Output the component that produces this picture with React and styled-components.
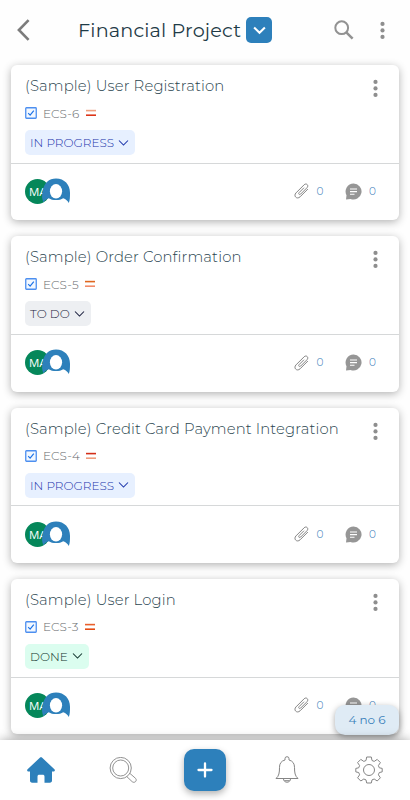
import React from 'react'
import styled, { createGlobalStyle } from 'styled-components'

const GlobalStyle = createGlobalStyle`
  * { box-sizing: border-box; }
  body {
    margin: 0;
    overflow: hidden;
    background: #fefefe;
    font-family: Montserrat, Inter, 'Open Sans', sans-serif;
  }
  svg { display: block; flex: none; }
  button { border: 0; padding: 0; background: none; font: inherit; }
`

const Screen = styled.div`
  position: relative;
  display: flex;
  flex-direction: column;
  height: 800px;
  overflow: hidden;
  background: #fefefe;
`
const Header = styled.header`
  display: flex;
  align-items: center;
  height: 65px;
  flex: none;
  padding: 0 25.5px 5px 17px;
`
const Title = styled.h1`
  margin: 0 0 0 48px;
  width: 168px;
  color: #1f3b47;
  font-size: 19.2px;
  font-weight: 400;
  line-height: 24px;
  letter-spacing: .17px;
  white-space: nowrap;
`
const ProjectToggle = styled.button`
  display: grid;
  place-items: center;
  width: 26px;
  height: 26px;
  border-radius: 5px;
  background: #2d80bb;
`
const HeaderActions = styled.div`
  display: flex;
  align-items: center;
  gap: 26px;
  margin-left: auto;
`
const List = styled.main`
  display: flex;
  flex-direction: column;
  gap: 16px;
  flex: 1;
  min-height: 0;
  padding: 0 11px;
`
const Card = styled.article`
  display: flex;
  flex-direction: column;
  flex: none;
  height: 155.3px;
  border-radius: 6px;
  background: #fff;
  box-shadow: 0 2px 8px rgba(0, 0, 0, .3);
`
const CardBody = styled.div`
  display: flex;
  justify-content: space-between;
  height: 98.7px;
  padding: 10px 21px 0 14px;
  border-bottom: 1px solid #d6d8d9;
`
const CardMenu = styled.button`
  height: 19px;
  margin-top: 4px;
`
const CardTitle = styled.h2`
  margin: 0;
  color: #2b4650;
  font-size: 14.8px;
  font-weight: 300;
  line-height: 22px;
  letter-spacing: .14px;
  white-space: nowrap;
`
const Meta = styled.div`
  display: flex;
  align-items: center;
  height: 16px;
  margin-top: 8px;
`
const Key = styled.span`
  width: ${props => props.$width}px;
  margin-left: 6px;
  color: #66696c;
  font-size: 12px;
  font-weight: 300;
  letter-spacing: .1px;
  white-space: nowrap;
`
const Status = styled.button`
  display: flex;
  align-items: center;
  justify-content: space-between;
  width: ${props => props.$width}px;
  height: 25px;
  margin-top: 9px;
  padding: 0 6px 0 5px;
  border-radius: 5px;
  color: ${props => props.$color};
  background: ${props => props.$background};
  font-size: 12px;
  font-weight: 300;
  white-space: nowrap;
`
const CardFooter = styled.div`
  display: flex;
  align-items: center;
  flex: 1;
  padding: 0 22px 1px 14px;
`
const Avatar = styled.div`
  width: 25px;
  height: 25px;
  padding-left: 4px;
  border-radius: 50%;
  color: #fff;
  background: #05875a;
  font: 11.5px/25px 'Open Sans', sans-serif;
`
const UserAvatar = styled.svg`
  position: relative;
  margin-left: -9px;
`
const Counter = styled.div`
  display: flex;
  align-items: center;
  margin-left: ${props => props.$push || 'auto'};
`
const Count = styled.span`
  width: 8px;
  margin-left: 7.5px;
  color: #3579b8;
  font-size: 10.5px;
  font-weight: 300;
`
const Toast = styled.div`
  position: absolute;
  right: 11px;
  bottom: 65px;
  width: 64px;
  height: 30px;
  border-radius: 10px;
  color: #397fba;
  background: #dfebf5;
  box-shadow: 0 2px 6px rgba(0, 0, 0, .35);
  font-size: 12px;
  line-height: 30px;
  text-align: center;
`
const NavBar = styled.nav`
  position: relative;
  display: grid;
  grid-template-columns: repeat(5, 1fr);
  place-items: center;
  flex: none;
  height: 60px;
  background: #fff;
  box-shadow: 0 0 10px rgba(0, 0, 0, .35);
`
const AddButton = styled.button`
  display: grid;
  place-items: center;
  width: 42px;
  height: 42px;
  border-radius: 10px;
  background: #2d80bb;
  box-shadow: 0 3px 7px rgba(0, 0, 0, .3);
`

const statuses = {
  progress: { label: 'IN PROGRESS', width: 110, color: '#1b34ab', background: '#e7f0ff' },
  todo: { label: 'TO DO', width: 66, color: '#191d3d', background: '#edeff2' },
  done: { label: 'DONE', width: 63.5, color: '#0f332c', background: '#dbfdef' },
}

const cards = [
  { title: '(Sample) User Registration', id: 'ECS-6', keyWidth: 42.5, status: 'progress', colors: ['#efa080', '#dc3518'] },
  { title: '(Sample) Order Confirmation', id: 'ECS-5', keyWidth: 42, status: 'todo', colors: ['#df671f', '#f28b68'] },
  { title: '(Sample) Credit Card Payment Integration', id: 'ECS-4', keyWidth: 43, status: 'progress', colors: ['#d32e19', '#ef9d7d'] },
  { title: '(Sample) User Login', id: 'ECS-3', keyWidth: 41.5, status: 'done', colors: ['#e9602b', '#e44b12'] },
]

const Dots = () => (
  <svg width='5' height='19' viewBox='0 0 5 19' fill='#8e8e8e'>
    <circle cx='2.5' cy='2.9' r='2.1' />
    <circle cx='2.5' cy='9.4' r='2.1' />
    <circle cx='2.5' cy='15.9' r='2.1' />
  </svg>
)

const Chevron = () => (
  <svg width='11' height='8' viewBox='0 0 11 8' fill='none' stroke='currentColor' strokeWidth='1.05'>
    <path d='M1 1.5 5.5 6 10 1.5' />
  </svg>
)

const Priority = ({ colors }) => (
  <svg width='10' height='8' viewBox='0 0 10 8' strokeWidth='1.6'>
    <path d='M0 1.6h10' stroke={colors[0]} />
    <path d='M0 6.2h10' stroke={colors[1]} />
  </svg>
)

const Checkbox = () => (
  <svg width='12' height='12' viewBox='0 0 12 12' fill='none'>
    <rect x='.75' y='.75' width='10.5' height='10.5' rx='.7' fill='#f3f8ff' stroke='#4d8ff0' strokeWidth='1.3' />
    <path d='m3.2 6.2 1.9 1.9 3.7-4.4' stroke='#1c73e8' strokeWidth='1.2' />
  </svg>
)

const Paperclip = () => (
  <svg width='15' height='16' viewBox='0 0 15 16' fill='none' stroke='#858585' strokeWidth='1' strokeLinecap='round'>
    <path d='M9.700 5 5.200 9.500c-1.300 1.400.2 2.800 1.500 1.500l6.300-6.300c2.200-2.300-.7-5.100-2.900-2.900L2 9.900c-3 3.100 1 7 4.100 3.900l7.500-7.500' />
  </svg>
)

const Comment = () => (
  <svg width='17' height='17' viewBox='0 0 17 17'>
    <path d='M8.5.5a8 8 0 1 1-3 15.4L1 16.5l.5-4.2A8 8 0 0 1 8.5.5Z' fill='#969696' />
    <path d='M5 6h7M5 8.6h7M5 11.2h4.5' stroke='#fff' strokeWidth='1.1' />
  </svg>
)

const TaskCard = ({ card }) => {
  const status = statuses[card.status]

  return (
    <Card>
      <CardBody>
        <div>
          <CardTitle>{card.title}</CardTitle>
          <Meta>
            <Checkbox />
            <Key $width={card.keyWidth}>{card.id}</Key>
            <Priority colors={card.colors} />
          </Meta>
          <Status $width={status.width} $color={status.color} $background={status.background}>
            {status.label}
            <Chevron />
          </Status>
        </div>
        <CardMenu><Dots /></CardMenu>
      </CardBody>
      <CardFooter>
        <Avatar>MA</Avatar>
        <UserAvatar width='30' height='27' viewBox='0 0 30 27'>
          <path d='M2.5 24.5C.8 21 .7 17.5 1.6 13 3 5 8 .5 15 .5c8.5 0 14 6.2 14 14.200 0 4.300 0 7.500-1.200 10.200-1-2.200-3-3.700-5.600-4.700-1.700 1.200-4.500 1.900-7.200 1.900s-5.500-.7-7.200-1.900c-2.600 1-4.300 2.100-5.300 4.300Z' fill='#2d80bb' />
          <ellipse cx='15' cy='13.300' rx='6.100' ry='7.200' fill='#fff' />
        </UserAvatar>
        <Counter>
          <Paperclip />
          <Count>0</Count>
        </Counter>
        <Counter $push='20px'>
          <Comment />
          <Count>0</Count>
        </Counter>
      </CardFooter>
    </Card>
  )
}

export default function App() {
  return (
    <Screen>
      <GlobalStyle />
      <Header>
        <svg width='13' height='22' viewBox='0 0 13 22' fill='none' stroke='#7c7c7c' strokeWidth='2.6'>
          <path d='M11.6 1.2 1.9 11l9.7 9.8' />
        </svg>
        <Title>Financial Project</Title>
        <ProjectToggle>
          <svg width='13' height='9' viewBox='0 0 14 9' fill='none' stroke='#fff' strokeWidth='2.2'>
            <path d='m1.2 1.2 5.8 5.8 5.8-5.8' />
          </svg>
        </ProjectToggle>
        <HeaderActions>
          <svg width='20' height='20' viewBox='0 0 20 20' fill='none' stroke='#929292'>
            <circle cx='7.7' cy='7.7' r='6.4' strokeWidth='2' />
            <path d='m12.3 12.3 6.3 6.3' strokeWidth='2.5' />
          </svg>
          <Dots />
        </HeaderActions>
      </Header>

      <List>
        {cards.map(card => <TaskCard key={card.id} card={card} />)}
      </List>

      <Toast>4 no 6</Toast>

      <NavBar>
        <svg width='28' height='26' viewBox='0 0 28 26' fill='#2d80bb'>
          <path d='M12.8.8c.7-.6 1.7-.6 2.4 0l12.2 11.4c1 .9.4 2.3-.8 2.3H25v9c0 1.4-.8 2.2-2.2 2.2h-5.3v-6c0-1.5-.6-2-2-2h-3c-1.4 0-2 .5-2 2v6H5.2C3.8 25.7 3 24.9 3 23.5v-9H1.4c-1.2 0-1.8-1.4-.8-2.3Z' />
        </svg>
        <svg width='28' height='26' viewBox='0 0 28 26' fill='none' stroke='#929292'>
          <circle cx='11.7' cy='11' r='10.6' />
          <circle cx='11.7' cy='11' r='8' />
          <path d='m17.9 19.7 5.3 5c2.3 1.9 5.4-1 3.4-3.3l-5.7-5' />
        </svg>
        <AddButton>
          <svg width='16' height='16' viewBox='0 0 16 16' stroke='#fff' strokeWidth='2.3' strokeLinecap='round'>
            <path d='M8 1.5v13M1.5 8h13' />
          </svg>
        </AddButton>
        <svg width='24' height='28' viewBox='0 0 24 28' fill='none' stroke='#858585' strokeLinejoin='round'>
          <path d='M10 4V2.7a2 2 0 0 1 4 0V4c3.8.9 5.5 3.7 5.5 7.3 0 5.5.5 8.7 3.5 11.2H1C4 20 4.5 16.8 4.5 11.3 4.5 7.7 6.2 4.9 10 4Z' />
          <path d='M8.5 23c.3 4.3 6.7 4.3 7 0M9.3 24.7h5.4' />
        </svg>
        <svg width='28' height='28' viewBox='0 0 28 28' fill='none' stroke='#858585' strokeLinejoin='round'>
          <path d='M11.7 1h4.6l.7 3.5 2.2.9 3-2 3.2 3.2-2 3 .9 2.2 2.9.6v3.5l-2.9.6-.9 2.3 2 3-3.2 3.2-3-2-2.2.9-.7 3.1h-4.6l-.7-3.1-2.200-.9-3 2-3.200-3.200 2-3-.9-2.300-2.900-.6v-3.500l2.900-.6.9-2.200-2-3 3.200-3.200 3 2 2.200-.9Z' />
          <circle cx='14' cy='14' r='5.5' />
        </svg>
      </NavBar>
    </Screen>
  )
}
